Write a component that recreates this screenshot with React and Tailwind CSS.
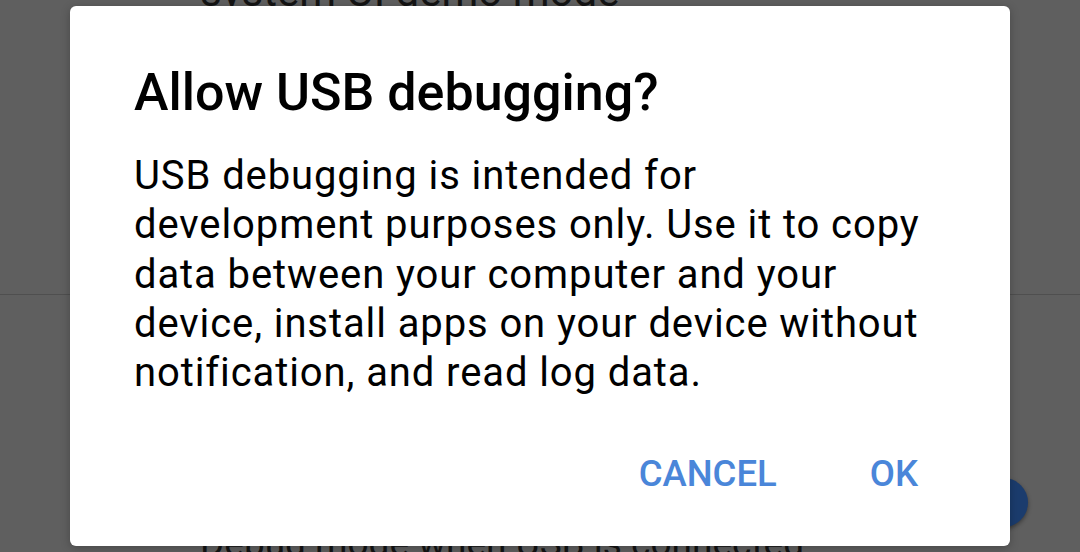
export default function App() {
  return (
    <div className="relative w-[1080px] h-[552px] overflow-hidden bg-[#5f5f5f] font-['Roboto',sans-serif]">
      {/* settings list behind the scrim */}
      <div className="flex flex-col">
        <div className="h-[295px] border-b border-[#4f4f4f] pl-[200px]">
          <p className="-mt-[33px] text-[42px] leading-[49px] text-[#141414]">system UI demo mode</p>
        </div>
        <div className="flex items-start justify-between pl-[200px] pr-[48px] pt-[175px]">
          <div>
            <p className="text-[37px] leading-[49px] text-[#141414]">USB debugging</p>
            <p className="text-[37px] leading-[49px] text-[#141414]">Debug mode when USB is connected</p>
          </div>
        </div>
      </div>
      <div className="absolute left-[979px] top-[478px] w-[49px] h-[49px] rounded-full bg-[#1b3c6d] shadow-[0_2px_4px_rgba(0,0,0,0.4)]" />

      {/* dialog */}
      <div className="absolute left-[70px] top-[6px] w-[940px] h-[540px] rounded-[6px] bg-white shadow-[0_2px_10px_rgba(0,0,0,0.25)] flex flex-col pl-[64px]">
        <h1 className="mt-[57px] text-[52px] leading-[60px] font-medium text-black">Allow USB debugging?</h1>
        <p className="mt-[28px] w-[800px] text-[40px] leading-[49.3px] tracking-[0.9px] text-black">
          USB debugging is intended for development purposes only. Use it to copy data between your computer and your device, install apps on your device without notification, and read log data.
        </p>
        <div className="mt-auto mb-[52px] mr-[92px] flex justify-end gap-[93px]">
          <span className="text-[36.5px] leading-[40px] font-medium text-[#4a86d9]">CANCEL</span>
          <span className="text-[36.5px] leading-[40px] font-medium text-[#4a86d9]">OK</span>
        </div>
      </div>
    </div>
  );
}
